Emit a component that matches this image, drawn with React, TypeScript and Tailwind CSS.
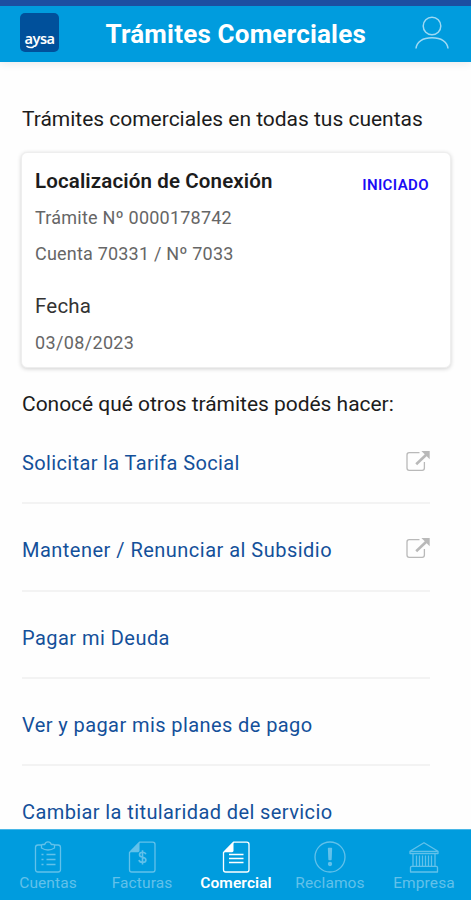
import type { ReactNode } from "react";

const Icon = ({ children }: { children: ReactNode }) => (
  <svg viewBox="0 0 32 32" className="h-8 w-8 shrink-0" fill="none" stroke="currentColor" strokeWidth="1.3" strokeLinejoin="round">
    {children}
  </svg>
);

const External = () => (
  <svg viewBox="0 0 24 22" className="mt-[3px] h-[22px] w-6 shrink-0 text-[#b9b9b9]" fill="none" stroke="currentColor" strokeWidth="1.3">
    <path d="M13.500 2.700H3.200Q1 2.700 1 4.900v13.200q0 2.200 2.200 2.200h13q2.200 0 2.200-2.200V12" />
    <path d="M10.200 14.300 20.500 4.500" strokeWidth="2.6" />
    <path d="M15.400.9h8.300v8.300z" fill="currentColor" stroke="none" />
  </svg>
);

const links: { label: string; external?: boolean; tracking: string }[] = [
  { label: "Solicitar la Tarifa Social", external: true, tracking: "tracking-[0.36px]" },
  { label: "Mantener / Renunciar al Subsidio", external: true, tracking: "tracking-[0.48px]" },
  { label: "Pagar mi Deuda", tracking: "tracking-[0.46px]" },
  { label: "Ver y pagar mis planes de pago", tracking: "tracking-[0.41px]" },
  { label: "Cambiar la titularidad del servicio", tracking: "tracking-[0.4px]" },
];

const Sheet = () => (
  <>
    <path d="M13.500 1.200h13.300q2.200 0 2.200 2.200v25.300q0 2.300-2.200 2.300H5.700q-2.200 0-2.200-2.300V11.500z" />
    <path d="M13.500 1.500v8.300q0 1.400-1.400 1.400H4z" fill="currentColor" stroke="none" />
  </>
);

const tabs: { label: string; icon: ReactNode; active?: boolean }[] = [
  {
    label: "Cuentas",
    icon: (
      <Icon>
        <path d="M9.500 4H6q-2.500 0-2.500 2.500v22Q3.500 31 6 31h20q2.500 0 2.500-2.500v-22Q28.500 4 26 4h-3.500" />
        <path d="M9.500 7V4.500q0-1 1-1h2.200Q13.500.8 16 .8t3.300 2.700h2.200q1 0 1 1V7q-3 2-6.500 2t-6.500-2z" />
        <path d="M9.500 13.500h2m3 0h9m-14 5h2m3 0h9m-14 5h2m3 0h9" />
      </Icon>
    ),
  },
  {
    label: "Facturas",
    icon: (
      <Icon>
        <Sheet />
        <path d="M19.800 13.300q-.6-2-3.300-2-3 0-3 2.400 0 2 3.100 2.500 3.300.5 3.300 2.700 0 2.400-3.400 2.400-3.100 0-3.500-2.300M16.500 9.200v14.400" strokeWidth="1.600" />
      </Icon>
    ),
  },
  {
    label: "Comercial",
    active: true,
    icon: (
      <Icon>
        <Sheet />
        <path d="M9 13.500h14.500M9 17.500h14.500M9 21.500h14.500" />
      </Icon>
    ),
  },
  {
    label: "Reclamos",
    icon: (
      <Icon>
        <circle cx="16" cy="16" r="15" />
        <path d="M14.500 7.500h3l-.5 11h-2z" fill="currentColor" />
        <circle cx="16" cy="23" r="1.500" fill="currentColor" />
      </Icon>
    ),
  },
  {
    label: "Empresa",
    icon: (
      <Icon>
        <path d="M16 1.700 30 10.300v2.200H2v-2.200zM2 10.300h28M5 12.500v12.700M27 12.500v12.700M2.500 31v-4.500q0-1.200 1.200-1.200h24.600q1.200 0 1.200 1.200V31z" />
        <path d="M8.500 14.500v10.500M11.500 14.500v10.500M14.500 14.500v10.500M17.500 14.500v10.500M20.500 14.500v10.500M23.500 14.500v10.500" />
      </Icon>
    ),
  },
];

export default function App() {
  return (
    <div className="flex h-[900px] w-[471px] flex-col overflow-hidden bg-[#fefefe] font-[Roboto,'Liberation_Sans',sans-serif] whitespace-nowrap text-[#1c1c1c]">
      <header className="z-10 flex h-[62px] shrink-0 items-center border-t-[6px] border-[#1c4fa1] bg-[#009cde] pr-[22px] pl-5 text-white shadow-[0_2px_8px_rgba(0,0,0,0.08)]">
        <div className="mb-1 flex h-[39px] w-[39px] flex-col items-center rounded-[5px] bg-[#00509b] pt-[16px]">
          <span className="font-['Noto_Sans',sans-serif] text-[14.5px] leading-[18px] font-semibold tracking-[-0.5px]">aysa</span>
          <svg viewBox="0 0 10 4" className="-mt-[2px] mr-[19px] h-1 w-[9px] shrink-0" fill="none" stroke="currentColor" strokeWidth="1.500">
            <path d="M.5 1q4 2.500 8 1" />
          </svg>
        </div>
        <h1 className="ml-[46.5px] text-[26px] leading-8 font-bold tracking-[0.2px]">Trámites Comerciales</h1>
        <svg viewBox="0 0 34 34" className="mb-[3px] ml-auto h-[34px] w-[34px]" fill="none" stroke="#9ed9f3" strokeWidth="1.500">
          <circle cx="17" cy="10" r="8.800" />
          <path d="M1 32.500C1.500 25.500 8 21.800 17 21.800S32.500 25.500 33 32.500" />
        </svg>
      </header>

      <main className="flex min-h-0 flex-1 flex-col overflow-hidden pr-5 pl-[21px]">
        <p className="mt-[45px] pl-px text-[21px] leading-6 tracking-[-0.02px]">Trámites comerciales en todas tus cuentas</p>

        <section className="mt-[21px] flex h-[216px] w-[430px] shrink-0 justify-between rounded-[6px] border border-[#eeeeee] bg-white pr-[21px] pl-[13px] shadow-[0_1px_4px_rgba(0,0,0,0.18)]">
          <div className="flex flex-col">
            <h2 className="mt-4 text-[20.5px] leading-6 font-semibold tracking-[0.13px]">Localización de Conexión</h2>
            <p className="mt-[14px] text-[18px] leading-[22px] tracking-[0.22px] text-[#666]">Trámite Nº 0000178742</p>
            <p className="mt-[14px] text-[18px] leading-[22px] tracking-[0.2px] text-[#666]">Cuenta 70331 / Nº 7033</p>
            <p className="mt-[29px] text-[20.5px] leading-6 tracking-[0.2px] text-[#333]">Fecha</p>
            <p className="mt-[14px] text-[18px] leading-[22px] tracking-[0.35px] text-[#666]">03/08/2023</p>
          </div>
          <span className="mt-[23px] text-[15px] leading-[18px] font-semibold tracking-[0.4px] text-[#1a0cf5]">INICIADO</span>
        </section>

        <p className="mt-6 pl-px text-[21px] leading-6 tracking-[-0.03px]">Conocé qué otros trámites podés hacer:</p>

        <ul className="mt-px flex flex-col pr-[21px] pl-px">
          {links.map((l) => (
            <li key={l.label} className="flex h-[87.250px] shrink-0 items-center justify-between border-b-2 border-[#f3f3f3] text-[#14509a]">
              <a className={`pt-[7px] text-[20px] leading-6 ${l.tracking}`}>{l.label}</a>
              {l.external && <External />}
            </li>
          ))}
        </ul>
      </main>

      <nav className="grid h-[71px] shrink-0 grid-cols-5 border-t border-[#48b7e7] bg-[#009cde] pl-px">
        {tabs.map((t) => (
          <div key={t.label} className={`flex flex-col items-center pt-[11px] ${t.active ? "text-white" : "text-[#62c1ea]"}`}>
            {t.icon}
            <span className={`text-[15.5px] leading-5 ${t.active ? "font-semibold tracking-[0.1px]" : "font-normal tracking-[0.1px]"}`}>{t.label}</span>
          </div>
        ))}
      </nav>
    </div>
  );
}
